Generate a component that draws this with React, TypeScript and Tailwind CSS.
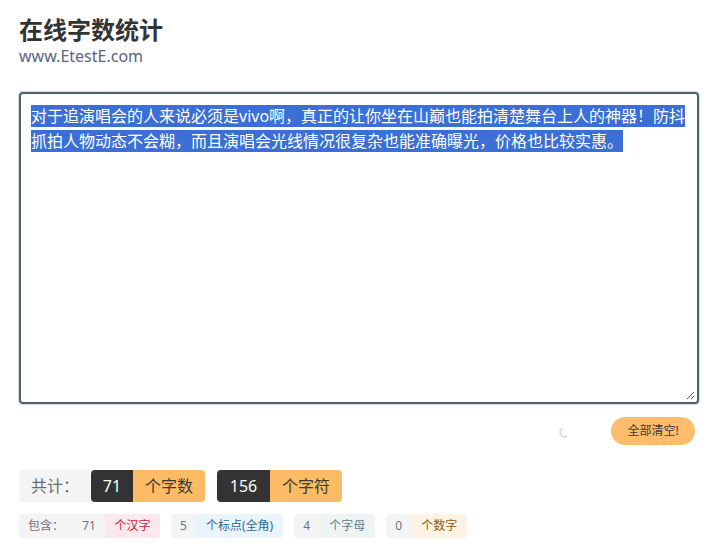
const text =
  "对于追演唱会的人来说必须是vivo啊，真正的让你坐在山巅也能拍清楚舞台上人的神器！防抖抓拍人物动态不会糊，而且演唱会光线情况很复杂也能准确曝光，价格也比较实惠。";

const details = [
  { n: "71", label: "个汉字", cls: "bg-[#fde9ed] text-[#c81e3c]" },
  { n: "5", label: "个标点(全角)", cls: "bg-[#eaf4fb] text-[#2b6a98]" },
  { n: "4", label: "个字母", cls: "bg-[#eef3f4] text-[#5f7d88]" },
  { n: "0", label: "个数字", cls: "bg-[#fdf3e5] text-[#8b5a1c]" },
];

export default function App() {
  return (
    <main
      className="min-h-screen bg-white pl-[19px] pr-[12px] pt-[14px]"
      style={{ fontFamily: '"Noto Sans", "Noto Sans CJK SC", sans-serif' }}
    >
      {/* 标题 */}
      <h1 className="text-[24px] font-bold leading-[32px] text-[#333]">在线字数统计</h1>
      <p className="text-[16px] leading-[21px] text-[#5a6482]">www.EtestE.com</p>

      {/* 输入框 */}
      <div className="relative mt-[25px] h-[312px] rounded-[4px] border-2 border-[#4d6468] bg-white px-[10px] py-[10px] shadow-[0_0_0_1px_#d3dde0]">
        <p className="text-[16px] leading-[25px] text-white">
          <span className="bg-[#3b6fd6]">{text}</span>
        </p>
        <svg
          className="absolute bottom-[2px] right-[2px]"
          width="10"
          height="10"
          viewBox="0 0 10 10"
        >
          <path d="M9 2L2 9M9 6L6 9" stroke="#555" strokeWidth="1" />
        </svg>
      </div>

      {/* 清空 */}
      <div className="mt-[13px] flex items-center justify-end gap-[40px] pr-[4px]">
        <svg width="12" height="12" viewBox="0 0 12 12" className="mt-[2px]">
          <path d="M3 2.6A4.5 4.5 0 0 0 7.5 10.3" fill="none" stroke="#d9d9d9" strokeWidth="1.6" strokeLinecap="round" />
        </svg>
        <button className="h-[28px] w-[84px] rounded-full bg-[#fdbd6c] text-[12px] text-[#3a3a3a]">
          全部清空!
        </button>
      </div>

      {/* 统计 */}
      <div className="mt-[25px] flex items-center gap-[12px] text-[16px]">
        <div className="flex h-[32px] items-stretch">
          <span className="flex w-[72px] items-center justify-center rounded-l-[4px] bg-[#f4f4f5] text-[#666b75]">
            共计：
          </span>
          <span className="flex w-[42px] items-center justify-center rounded-l-[4px] bg-[#333333] text-white">
            71
          </span>
          <span className="flex w-[72px] items-center justify-center rounded-r-[4px] bg-[#fcbb64] text-[#3f3a30]">
            个字数
          </span>
        </div>
        <div className="flex h-[32px] items-stretch">
          <span className="flex w-[53px] items-center justify-center rounded-l-[4px] bg-[#333333] text-white">
            156
          </span>
          <span className="flex w-[72px] items-center justify-center rounded-r-[4px] bg-[#fcbb64] text-[#3f3a30]">
            个字符
          </span>
        </div>
      </div>

      <div className="mt-[12px] flex items-center gap-[11px] text-[12px]">
        <div className="flex h-[24px] items-stretch">
          <span className="flex w-[54px] items-center justify-center rounded-l-[4px] bg-[#f4f4f5] text-[#6b7280]">
            包含：
          </span>
          <span className="flex w-[32px] items-center justify-center bg-[#f4f4f5] text-[#6b7280]">
            {details[0].n}
          </span>
          <span className={`flex w-[55px] items-center justify-center rounded-r-[4px] ${details[0].cls}`}>
            {details[0].label}
          </span>
        </div>
        {details.slice(1).map((d) => (
          <div key={d.label} className="flex h-[24px] items-stretch">
            <span className="flex w-[25px] items-center justify-center rounded-l-[4px] bg-[#f4f4f5] text-[#6b7280]">
              {d.n}
            </span>
            <span className={`flex items-center justify-center rounded-r-[4px] px-[10px] ${d.cls}`}>
              {d.label}
            </span>
          </div>
        ))}
      </div>
    </main>
  );
}
